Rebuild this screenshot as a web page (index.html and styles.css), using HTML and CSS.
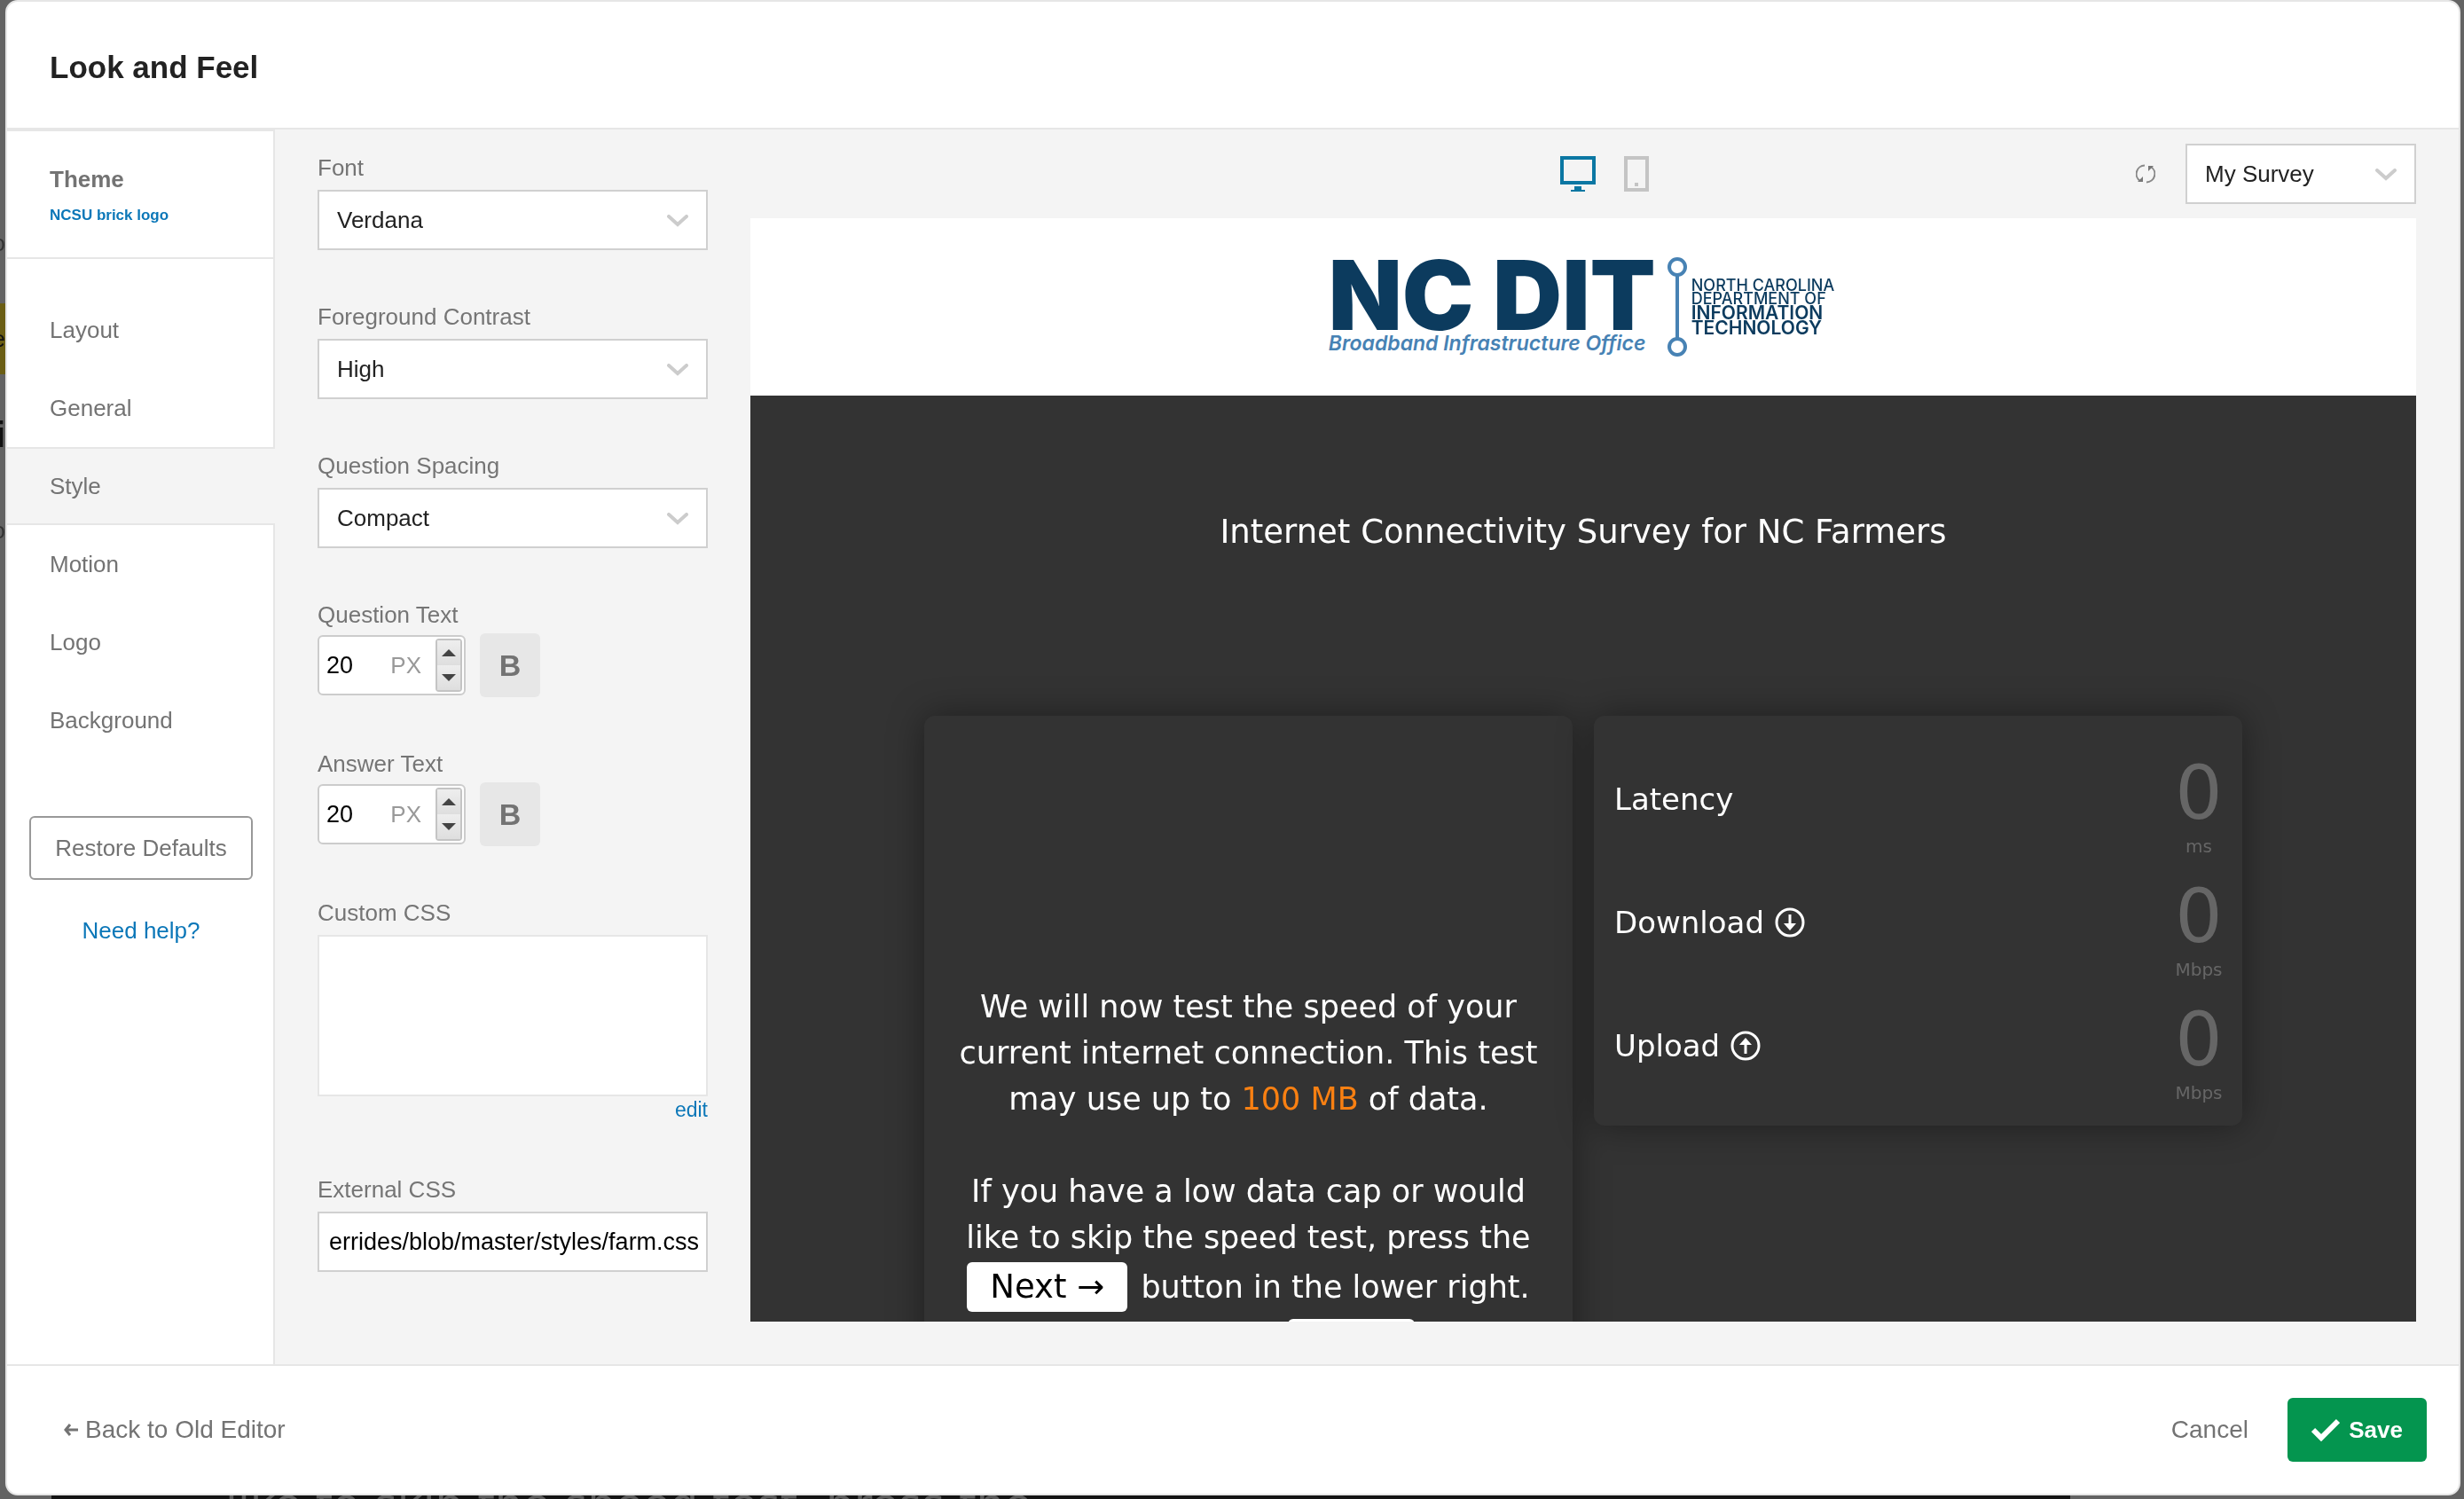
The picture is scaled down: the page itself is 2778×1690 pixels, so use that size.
FILE: index.html
```html
<!DOCTYPE html>
<html lang="en">
<head>
<meta charset="utf-8">
<title>Look and Feel</title>
<link rel="stylesheet" href="styles.css">
</head>
<body>
<div class="backdrop" aria-hidden="true">
  <div class="backdrop-rail">
    <span class="rail-item">o</span>
    <span class="rail-item rail-item-marked">e</span>
    <span class="rail-item rail-item-title">i</span>
    <span class="rail-item">o</span>
  </div>
  <div class="backdrop-survey">like to skip the speed test, press the</div>
</div>

<div class="modal" role="dialog" aria-labelledby="dialog-title">
  <header class="modal-header">
    <h1 id="dialog-title">Look and Feel</h1>
  </header>

  <div class="modal-body">
    <aside class="sidebar">
      <div class="theme">
        <strong class="theme-title">Theme</strong>
        <a class="theme-name" href="#">NCSU brick logo</a>
      </div>
      <nav class="tabs">
        <a class="tab" href="#">Layout</a>
        <a class="tab" href="#">General</a>
        <a class="tab tab-active" href="#" aria-current="page">Style</a>
        <a class="tab" href="#">Motion</a>
        <a class="tab" href="#">Logo</a>
        <a class="tab" href="#">Background</a>
      </nav>
      <div class="sidebar-actions">
        <button class="restore" type="button">Restore Defaults</button>
        <a class="help" href="#">Need help?</a>
      </div>
    </aside>

    <form class="settings">
      <div class="field">
        <label for="font">Font</label>
        <div class="select-box">
          <select id="font"><option>Verdana</option></select>
          <svg class="chevron" viewBox="0 0 24 14" aria-hidden="true"><path d="M2 2l10 9L22 2"/></svg>
        </div>
      </div>
      <div class="field">
        <label for="contrast">Foreground Contrast</label>
        <div class="select-box">
          <select id="contrast"><option>High</option></select>
          <svg class="chevron" viewBox="0 0 24 14" aria-hidden="true"><path d="M2 2l10 9L22 2"/></svg>
        </div>
      </div>
      <div class="field">
        <label for="spacing">Question Spacing</label>
        <div class="select-box">
          <select id="spacing"><option>Compact</option></select>
          <svg class="chevron" viewBox="0 0 24 14" aria-hidden="true"><path d="M2 2l10 9L22 2"/></svg>
        </div>
      </div>
      <div class="field field-size">
        <label for="question-size">Question Text</label>
        <div class="size-row">
          <div class="stepper">
            <input id="question-size" type="number" value="20">
            <span class="unit">PX</span>
            <div class="spin">
              <button type="button" aria-label="Increase question text"><svg viewBox="0 0 16 8"><path d="M8 0l8 8H0z"/></svg></button>
              <button type="button" aria-label="Decrease question text"><svg viewBox="0 0 16 8"><path d="M0 0h16L8 8z"/></svg></button>
            </div>
          </div>
          <button class="bold" type="button" aria-label="Bold question text">B</button>
        </div>
      </div>
      <div class="field field-size">
        <label for="answer-size">Answer Text</label>
        <div class="size-row">
          <div class="stepper">
            <input id="answer-size" type="number" value="20">
            <span class="unit">PX</span>
            <div class="spin">
              <button type="button" aria-label="Increase answer text"><svg viewBox="0 0 16 8"><path d="M8 0l8 8H0z"/></svg></button>
              <button type="button" aria-label="Decrease answer text"><svg viewBox="0 0 16 8"><path d="M0 0h16L8 8z"/></svg></button>
            </div>
          </div>
          <button class="bold" type="button" aria-label="Bold answer text">B</button>
        </div>
      </div>
      <div class="field">
        <label for="custom-css">Custom CSS</label>
        <textarea id="custom-css"></textarea>
        <a class="edit" href="#">edit</a>
      </div>
      <div class="field">
        <label for="external-css">External CSS</label>
        <input class="text-input" id="external-css" type="text" value="errides/blob/master/styles/farm.css">
      </div>
    </form>

    <section class="preview-pane">
      <div class="toolbar">
        <div class="devices">
          <button class="icon-button device-desktop" type="button" aria-label="Desktop preview">
            <svg width="40" height="40" viewBox="0 0 40 40"><path fill-rule="evenodd" d="M0 0h40v32H0zM4 4v24h32V4z"/><path d="M16 34h8v4h4v2H12v-2h4z"/></svg>
          </button>
          <button class="icon-button device-phone" type="button" aria-label="Phone preview">
            <svg width="28" height="40" viewBox="0 0 28 40"><path fill-rule="evenodd" d="M0 0h28v40H0zM4 4v32h20V4z"/><path d="M12 30h4v4h-4z"/></svg>
          </button>
        </div>
        <div class="toolbar-right">
          <button class="icon-button refresh" type="button" aria-label="Refresh preview">
            <svg width="22" height="22" viewBox="0 0 22 22"><path class="arc" d="M10 1.500A9.500 9.500 0 0 0 5 19"/><path class="arc" d="M12 20.500A9.500 9.500 0 0 0 17 3"/><path d="M2 20h6v-6zM20 2h-6v6z"/></svg>
          </button>
          <div class="select-box survey-select">
            <select aria-label="Survey"><option>My Survey</option></select>
            <svg class="chevron" viewBox="0 0 24 14" aria-hidden="true"><path d="M2 2l10 9L22 2"/></svg>
          </div>
        </div>
      </div>

      <div class="preview">
        <div class="brand">
          <div class="brand-main">
            <div class="brand-name">NC DIT</div>
            <div class="brand-tagline">Broadband Infrastructure Office</div>
          </div>
          <svg class="brand-link" width="24" height="114" viewBox="0 0 24 114" aria-hidden="true"><path d="M12 22v70"/><circle cx="12" cy="12" r="9"/><circle cx="12" cy="102" r="9"/></svg>
          <div class="brand-dept">
            <span>NORTH CAROLINA</span>
            <span>DEPARTMENT OF</span>
            <b>INFORMATION</b>
            <b>TECHNOLOGY</b>
          </div>
        </div>
        <div class="survey">
          <h2>Internet Connectivity Survey for NC Farmers</h2>
          <div class="cards">
            <div class="card intro">
              <p>We will now test the speed of your current internet connection. This test may use up to <em>100 MB</em> of data.</p>
              <p>If you have a low data cap or would like to skip the speed test, press the <span class="chip">Next →</span> button in the lower right.</p>
              <div class="chip-row"><span class="chip">Start</span></div>
            </div>
            <div class="card metrics">
              <div class="metric">
                <span class="metric-name">Latency</span>
                <span class="metric-value"><b>0</b><small>ms</small></span>
              </div>
              <div class="metric">
                <span class="metric-name">Download
                  <svg width="34" height="34" viewBox="0 0 34 34" aria-hidden="true"><circle cx="17" cy="17" r="15"/><path d="M15.500 8h3v10H24l-7 8-7-8h5.500z"/></svg></span>
                <span class="metric-value"><b>0</b><small>Mbps</small></span>
              </div>
              <div class="metric">
                <span class="metric-name">Upload
                  <svg width="34" height="34" viewBox="0 0 34 34" aria-hidden="true"><circle cx="17" cy="17" r="15"/><path d="M15.500 26h3V16H24l-7-8-7 8h5.500z"/></svg></span>
                <span class="metric-value"><b>0</b><small>Mbps</small></span>
              </div>
            </div>
          </div>
        </div>
      </div>
    </section>
  </div>

  <footer class="modal-footer">
    <a class="back" href="#"><svg width="16" height="16" viewBox="0 0 16 16" aria-hidden="true"><path d="M16 8H2M7 2L2 8l5 6"/></svg>Back to Old Editor</a>
    <div class="footer-actions">
      <button class="cancel" type="button">Cancel</button>
      <button class="save" type="submit"><svg width="32" height="26" viewBox="0 0 32 26" aria-hidden="true"><path d="M2 13l9 9L30 3"/></svg>Save</button>
    </div>
  </footer>
</div>
</body>
</html>
```
FILE: styles.css
```css
* {
  box-sizing: border-box;
}

body {
  margin: 0;
  height: 100vh;
  overflow: hidden;
  background: #636363;
  color: #222;
  font: 26px/30px "Liberation Sans", Arial, sans-serif;
}

button,
input,
select,
textarea {
  font: inherit;
  color: inherit;
  margin: 0;
}

button {
  padding: 0;
  border: 0;
  background: none;
}

a {
  color: #0b77b8;
  text-decoration: none;
}

/* Dimmed editor page behind the dialog */
.backdrop {
  position: fixed;
  inset: 0;
  overflow: hidden;
}

.backdrop-rail {
  display: flex;
  flex-direction: column;
  align-items: flex-end;
  gap: 28px;
  width: 6px;
  padding-top: 234px;
  color: #333;
}

.rail-item {
  display: flex;
  justify-content: flex-end;
  width: 40px;
  height: 80px;
  line-height: 80px;
}

.rail-item-marked {
  background: #6b5e14;
  color: #111;
}

.rail-item-title {
  color: #111;
  font-size: 40px;
  font-weight: 700;
}

.backdrop-survey {
  position: absolute;
  left: 58px;
  right: 444px;
  bottom: -36px;
  height: 60px;
  padding-left: 196px;
  background: #141414;
  color: #5c5c5c;
  font: 50px/60px "DejaVu Sans", Verdana, sans-serif;
}

.modal {
  position: relative;
  display: flex;
  flex-direction: column;
  height: calc(100vh - 4px);
  margin: 0 4px 4px 6px;
  border: 2px solid #e6e6e6;
  border-radius: 14px;
  background: #fff;
  overflow: hidden;
}

.modal-header {
  padding: 52px 48px 46px;
  border-bottom: 2px solid #e6e6e6;
}

.modal-header h1 {
  margin: 0;
  font-size: 35px;
  line-height: 44px;
  font-weight: 700;
}

.modal-body {
  flex: 1;
  min-height: 0;
  display: flex;
  background: #f4f4f4;
}

/* Sidebar */
.sidebar {
  width: 302px;
  display: flex;
  flex-direction: column;
  color: #737373;
}

.theme {
  display: flex;
  flex-direction: column;
  gap: 14px;
  height: 146px;
  padding: 39px 48px 0;
  background: #fff;
  border: solid #e6e6e6;
  border-width: 2px 2px 2px 0;
}

.theme-name {
  font-size: 17px;
  line-height: 24px;
  font-weight: 700;
}

.tabs {
  display: flex;
  flex-direction: column;
}

.tab {
  height: 88px;
  padding: 0 48px;
  line-height: 88px;
  color: inherit;
  background: #fff;
  border-right: 2px solid #e6e6e6;
}

.tab:first-child {
  height: 124px;
  padding-top: 36px;
}

.tab-active {
  background: #f4f4f4;
  border: solid #e6e6e6;
  border-width: 2px 0;
  line-height: 84px;
}

.sidebar-actions {
  flex: 1;
  display: flex;
  flex-direction: column;
  align-items: center;
  gap: 42px;
  padding: 64px 23px 0 25px;
  background: #fff;
  border-right: 2px solid #e6e6e6;
}

.restore {
  width: 100%;
  height: 72px;
  border: 2px solid #999;
  border-radius: 6px;
}

/* Settings column */
.settings {
  width: 536px;
  padding: 28px 48px 0;
  display: flex;
  flex-direction: column;
  gap: 60px;
}

.field {
  display: flex;
  flex-direction: column;
  gap: 10px;
}

.field-size {
  gap: 6px;
}

.field label {
  color: #757575;
}

.select-box {
  position: relative;
  height: 68px;
}

.select-box select {
  appearance: none;
  width: 100%;
  height: 100%;
  padding: 0 60px 0 20px;
  border: 2px solid #d0d0d0;
  border-radius: 0;
  background: #fff;
}

.chevron {
  position: absolute;
  right: 22px;
  top: 28px;
  width: 24px;
  height: 14px;
  fill: none;
  stroke: #ccc;
  stroke-width: 4;
  stroke-linecap: round;
  pointer-events: none;
}

.size-row {
  display: flex;
  align-items: center;
  gap: 16px;
}

.stepper {
  display: flex;
  align-items: center;
  width: 167px;
  height: 68px;
  padding: 4px 2px 4px 8px;
  border: 2px solid #ccc;
  border-radius: 6px;
  background: #fff;
}

.stepper input {
  flex: 1;
  min-width: 0;
  padding: 0;
  border: 0;
  color: #000;
  font-size: 27px;
  appearance: textfield;
}

.stepper input::-webkit-inner-spin-button {
  appearance: none;
}

.unit {
  margin-right: 16px;
  color: #999;
}

.spin {
  width: 30px;
  height: 60px;
  display: flex;
  flex-direction: column;
  border: 2px solid #c4c4c4;
  border-radius: 4px;
  background: #e6e6e6;
}

.spin button {
  flex: 1;
  display: flex;
  align-items: center;
  justify-content: center;
  background: linear-gradient(#eee, #dedede);
}

.spin svg {
  width: 16px;
  height: 8px;
  fill: #444;
}

.bold {
  width: 68px;
  height: 72px;
  border-radius: 6px;
  background: #e7e7e7;
  color: #737373;
  font-size: 34px;
  font-weight: 700;
}

textarea {
  height: 182px;
  border: 2px solid #e6e6e6;
  background: #fff;
  resize: none;
}

.edit {
  align-self: flex-end;
  margin-top: -10px;
  font-size: 23px;
}

.text-input {
  height: 68px;
  padding: 0 0 0 11px;
  border: 2px solid #d0d0d0;
  color: #000;
  font-size: 27px;
}

/* Preview */
.preview-pane {
  flex: 1;
  min-width: 0;
  display: flex;
  flex-direction: column;
  padding: 0 48px 48px 0;
}

.toolbar {
  display: grid;
  grid-template-columns: 1fr auto 1fr;
  align-items: center;
  height: 100px;
}

.devices {
  grid-column: 2;
  display: flex;
  gap: 32px;
  padding-left: 48px;
}

.icon-button {
  display: flex;
}

.device-desktop {
  fill: #0b77a3;
}

.device-phone {
  fill: #c4c4c4;
}

.toolbar-right {
  display: flex;
  align-items: center;
  justify-content: flex-end;
  gap: 34px;
}

.refresh {
  fill: #777;
}

.refresh .arc {
  fill: none;
  stroke: #888;
  stroke-width: 2;
}

.survey-select {
  width: 260px;
}

.preview {
  flex: 1;
  min-height: 0;
  display: flex;
  flex-direction: column;
  overflow: hidden;
  background: #333;
  color: #fff;
  font: 35px/52px "DejaVu Sans", Verdana, sans-serif;
}

.brand {
  flex: none;
  display: flex;
  align-items: center;
  justify-content: center;
  height: 200px;
  padding-right: 4px;
  background: #fff;
  color: #0c3b5e;
}

.brand-name {
  padding-top: 2px;
  font: 900 108px/80px Inter, sans-serif;
}

.brand-tagline {
  color: #4782b4;
  font: italic 600 23px/28px Inter, sans-serif;
}

.brand-link {
  margin: 0 4px 0 12px;
  fill: none;
  stroke: #4782b4;
  stroke-width: 4;
}

.brand-dept {
  display: flex;
  flex-direction: column;
  font: 500 18px/15px Inter, sans-serif;
}

.brand-dept b {
  font-size: 21px;
  line-height: 17px;
  font-weight: 600;
}

.survey {
  padding: 128px 24px 0;
}

.survey h2 {
  margin: 0 0 181px;
  font-size: 37px;
  font-weight: 400;
  text-align: center;
}

.cards {
  display: grid;
  grid-template-columns: 1fr 1fr;
  align-items: start;
  gap: 24px;
  max-width: 1486px;
  margin: 0 auto;
}

.card {
  border-radius: 12px;
  background: #333;
  box-shadow: 0 0 40px rgba(0, 0, 0, 0.4);
}

.intro {
  padding: 302px 36px 300px;
  text-align: center;
}

.intro p {
  margin: 0 0 52px;
}

.intro p + p {
  margin-bottom: 6px;
}

.intro em {
  color: #f98012;
  font-style: normal;
}

.chip {
  display: inline-block;
  height: 56px;
  margin: 2px 4px 0 0;
  padding: 0 26px;
  border-radius: 6px;
  background: #fff;
  color: #000;
  font-size: 37px;
  line-height: 56px;
}

.chip-row {
  padding-left: 236px;
}

.metrics {
  padding: 24px 21px 21px 23px;
  font-size: 34px;
}

.metric {
  display: flex;
  justify-content: space-between;
  height: 139px;
}

.metric-name {
  display: flex;
  align-items: center;
  gap: 12px;
  height: 139px;
}

.metric-name svg {
  fill: #fff;
}

.metric-name circle {
  fill: none;
  stroke: #fff;
  stroke-width: 3;
}

.metric-value {
  display: flex;
  flex-direction: column;
  align-items: center;
  width: 56px;
  color: #666;
}

.metric-value b {
  height: 108px;
  font-size: 84px;
  line-height: 126px;
  font-weight: 400;
}

.metric-value small {
  font-size: 20px;
  line-height: 30px;
}

/* Footer */
.modal-footer {
  display: flex;
  align-items: center;
  justify-content: space-between;
  height: 146px;
  padding: 0 36px 0 64px;
  border-top: 2px solid #e6e6e6;
  color: #737373;
  font-size: 28px;
}

.back {
  display: flex;
  align-items: center;
  gap: 8px;
  color: inherit;
}

.back svg {
  fill: none;
  stroke: currentColor;
  stroke-width: 3;
}

.footer-actions {
  display: flex;
  align-items: center;
  gap: 44px;
}

.save {
  display: flex;
  align-items: center;
  justify-content: center;
  gap: 10px;
  width: 157px;
  height: 72px;
  border-radius: 6px;
  background: #04954f;
  color: #fff;
  font-weight: 700;
  font-size: 26px;
}

.save svg {
  fill: none;
  stroke: #fff;
  stroke-width: 6;
}
```
